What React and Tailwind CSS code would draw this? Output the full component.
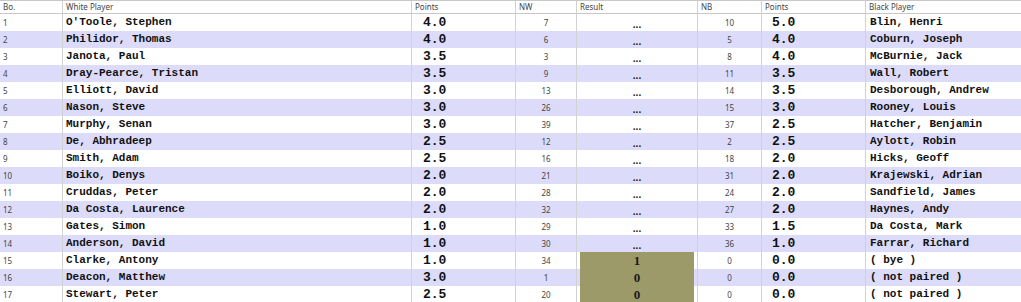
import React from 'react';

const rows = [
  [1, "O'Toole, Stephen", '4.0', 7, '...', 10, '5.0', 'Blin, Henri'],
  [2, 'Philidor, Thomas', '4.0', 6, '...', 5, '4.0', 'Coburn, Joseph'],
  [3, 'Janota, Paul', '3.5', 3, '...', 8, '4.0', 'McBurnie, Jack'],
  [4, 'Dray-Pearce, Tristan', '3.5', 9, '...', 11, '3.5', 'Wall, Robert'],
  [5, 'Elliott, David', '3.0', 13, '...', 14, '3.5', 'Desborough, Andrew'],
  [6, 'Nason, Steve', '3.0', 26, '...', 15, '3.0', 'Rooney, Louis'],
  [7, 'Murphy, Senan', '3.0', 39, '...', 37, '2.5', 'Hatcher, Benjamin'],
  [8, 'De, Abhradeep', '2.5', 12, '...', 2, '2.5', 'Aylott, Robin'],
  [9, 'Smith, Adam', '2.5', 16, '...', 18, '2.0', 'Hicks, Geoff'],
  [10, 'Boiko, Denys', '2.0', 21, '...', 31, '2.0', 'Krajewski, Adrian'],
  [11, 'Cruddas, Peter', '2.0', 28, '...', 24, '2.0', 'Sandfield, James'],
  [12, 'Da Costa, Laurence', '2.0', 32, '...', 27, '2.0', 'Haynes, Andy'],
  [13, 'Gates, Simon', '1.0', 29, '...', 33, '1.5', 'Da Costa, Mark'],
  [14, 'Anderson, David', '1.0', 30, '...', 36, '1.0', 'Farrar, Richard'],
  [15, 'Clarke, Antony', '1.0', 34, '1', 0, '0.0', '( bye )'],
  [16, 'Deacon, Matthew', '3.0', 1, '0', 0, '0.0', '( not paired )'],
  [17, 'Stewart, Peter', '2.5', 20, '0', 0, '0.0', '( not paired )'],
];

const grid = 'grid grid-cols-[63px_349px_104px_61px_121px_64px_104px_1fr]';
const cell = 'border-r border-[#d2d2d2] flex items-center overflow-hidden whitespace-nowrap';
const small = "text-[8px] text-[#444] font-['Noto_Sans',sans-serif]";
const mono = "font-['Courier_New','Courier','Nimbus_Mono_PS','FreeMono','Liberation_Mono',monospace] font-bold text-[#111]";

const Header = () => (
  <div className={`${grid} h-[14px] border-t border-b border-[#c8c8c8] bg-white`}>
    {['Bo.', 'White Player', 'Points', 'NW', 'Result', 'NB', 'Points', 'Black Player'].map((h, i) => (
      <div key={i} className={`${cell} ${small} pl-[3px] ${i === 7 ? 'border-r-0' : ''}`}>{h}</div>
    ))}
  </div>
);

const Row = ({ r, idx }) => {
  const bg = idx % 2 === 1 ? 'bg-[#dcdcfa]' : 'bg-white';
  const played = r[4] !== '...';
  return (
    <div className={`${grid} h-[17px] ${bg}`}>
      <div className={`${cell} ${small} pl-[3px]`}>{r[0]}</div>
      <div className={`${cell} ${mono} text-[11px] pl-[3px]`}>{r[1]}</div>
      <div className={`${cell} ${mono} text-[13px] pl-[11px]`}>{r[2]}</div>
      <div className={`${cell} ${small} justify-center`}>{r[3]}</div>
      <div className={`${cell} justify-center ${played ? 'px-[3px] items-stretch' : ''}`}>
        {played ? (
          <div className="w-full bg-[#9c9a69] flex items-center justify-center font-['Liberation_Serif',serif] font-bold text-[13px] text-[#1a1a1a]">
            {r[4]}
          </div>
        ) : (
          <span className="font-['Liberation_Sans',sans-serif] font-bold text-[10px] text-[#222] pt-[4px]">...</span>
        )}
      </div>
      <div className={`${cell} ${small} justify-center`}>{r[5]}</div>
      <div className={`${cell} ${mono} text-[13px] pl-[10px]`}>{r[6]}</div>
      <div className={`${cell} ${mono} text-[11px] pl-[4px] border-r-0`}>{r[7]}</div>
    </div>
  );
};

export default function App() {
  return (
    <div className="w-[1021px] h-[302px] bg-white overflow-hidden">
      <Header />
      {rows.map((r, i) => (
        <Row key={i} r={r} idx={i} />
      ))}
    </div>
  );
}
